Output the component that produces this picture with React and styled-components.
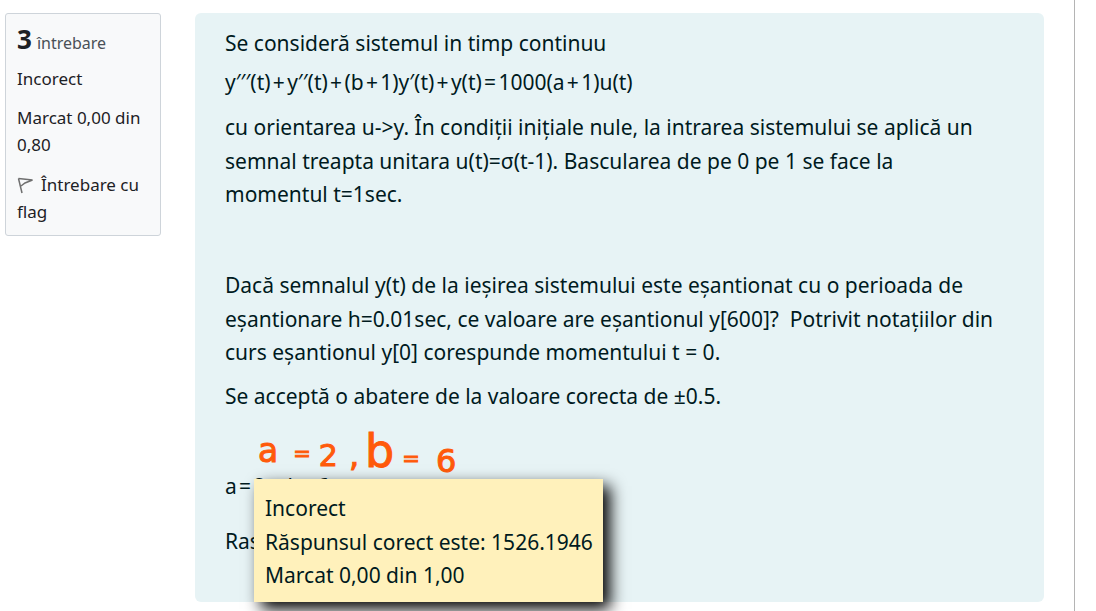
import React from "react";
import styled, { createGlobalStyle } from "styled-components";

const GlobalStyle = createGlobalStyle`
  html, body {
    margin: 0;
    padding: 0;
    background: #ffffff;
  }
  body {
    font-family: "Noto Sans", "Open Sans", sans-serif;
    color: #001a1e;
    overflow: hidden;
  }
`;

const Page = styled.div`
  width: 1075px;
  height: 611px;
  box-sizing: border-box;
  border-right: 1px solid #b4b4b4;
  padding: 13px 30px 0 5px;
  display: flex;
  align-items: flex-start;
  gap: 34px;
`;

const InfoCard = styled.aside`
  width: 156px;
  height: 223px;
  flex: none;
  box-sizing: border-box;
  padding: 8px 11px;
  background: #f8f9fa;
  border: 1px solid #ced4da;
  border-radius: 3px;
  color: #1d2125;
  font-size: 17px;
  line-height: 27px;
`;

const QuestionNo = styled.h3`
  margin: 0 0 5px;
  font-size: 16px;
  font-weight: 400;
  line-height: 34px;
  color: #495057;
`;

const Number = styled.span`
  font-size: 26px;
  font-weight: 700;
  color: #1d2125;
  margin-right: 5px;
`;

const InfoLine = styled.div`
  margin-bottom: ${(p) => p.$gap ?? 12}px;
`;

const FlagIcon = styled.svg`
  width: 17px;
  height: 17px;
  margin-right: 7px;
  vertical-align: -3px;
`;

const Panel = styled.main`
  position: relative;
  width: 849px;
  height: 589px;
  flex: none;
  box-sizing: border-box;
  padding: 14px 45px 0 30px;
  background: #e7f3f5;
  border-radius: 6px;
  font-size: 21px;
  line-height: 33.5px;
`;

const Para = styled.p`
  margin: 0 0 ${(p) => p.$gap ?? 10.5}px;
`;

const Op = styled.span`
  margin: 0 2.3px;
`;

const Ink = styled.div`
  position: absolute;
  left: 63px;
  top: 415px;
  display: flex;
  align-items: baseline;
  color: #ff5a0a;
  font-family: "DejaVu Sans", sans-serif;
  line-height: 44px;
  white-space: nowrap;
  -webkit-text-stroke: 1px #ff5a0a;
`;

const InkMark = styled.span`
  font-size: ${(p) => p.$size}px;
  margin-left: ${(p) => p.$left}px;
  transform: translateY(${(p) => p.$drop ?? 0}px);
`;

const Tooltip = styled.div`
  position: absolute;
  left: 59px;
  top: 466px;
  width: 349px;
  height: 123px;
  box-sizing: border-box;
  padding: 13px 0 0 11px;
  background: #fff1bb;
  box-shadow: 7px 7px 15px #000000;
  white-space: nowrap;
`;

function App() {
  return (
    <>
      <GlobalStyle />
      <Page>
        <InfoCard>
          <QuestionNo>
            <Number>3</Number>întrebare
          </QuestionNo>
          <InfoLine>Incorect</InfoLine>
          <InfoLine $gap={13}>Marcat 0,00 din 0,80</InfoLine>
          <div>
            <FlagIcon viewBox="0 0 17 17" fill="none" stroke="#6f6f6f" strokeWidth="1.5">
              <path d="M1.5 1.5 L5 16" />
              <path d="M1.5 1.5 L15.5 3 L8 6 L4 9" />
            </FlagIcon>
            Întrebare cu flag
          </div>
        </InfoCard>
        <Panel>
          <Para $gap={5.5}>Se consideră sistemul in timp continuu</Para>
          <Para $gap={11.5}>
            y′′′(t)<Op>+</Op>y′′(t)<Op>+</Op>(b<Op>+</Op>1)y′(t)<Op>+</Op>y(t)<Op>=</Op>1000(a
            <Op>+</Op>1)u(t)
          </Para>
          <Para>
            cu orientarea u-&gt;y. În condiții inițiale nule, la intrarea sistemului se aplică un
            semnal treapta unitara u(t)=σ(t-1). Bascularea de pe 0 pe 1 se face la momentul t=1sec.
          </Para>
          <Para $gap={13.5}>&nbsp;</Para>
          <Para>
            Dacă semnalul y(t) de la ieșirea sistemului este eșantionat cu o perioada de
            eșantionare h=0.01sec, ce valoare are eșantionul y[600]?&nbsp; Potrivit notațiilor din
            curs eșantionul y[0] corespunde momentului t = 0.
          </Para>
          <Para $gap={56.5}>Se acceptă o abatere de la valoare corecta de ±0.5.</Para>
          <Para $gap={21}>
            a<Op>=</Op>2 &nbsp;, b<Op>=</Op>6
          </Para>
          <Para>Raspuns:</Para>
          <Ink>
            <InkMark $size={33} $left={0} $drop={-4}>a</InkMark>
            <InkMark $size={21} $left={15} $drop={-5}>=</InkMark>
            <InkMark $size={30} $left={8}>2</InkMark>
            <InkMark $size={32} $left={11}>,</InkMark>
            <InkMark $size={46} $left={6} $drop={1}>b</InkMark>
            <InkMark $size={21} $left={8}>=</InkMark>
            <InkMark $size={32} $left={16} $drop={6}>6</InkMark>
          </Ink>
          <Tooltip>
            <div>Incorect</div>
            <div>Răspunsul corect este: 1526.1946</div>
            <div>Marcat 0,00 din 1,00</div>
          </Tooltip>
        </Panel>
      </Page>
    </>
  );
}

export default App;
